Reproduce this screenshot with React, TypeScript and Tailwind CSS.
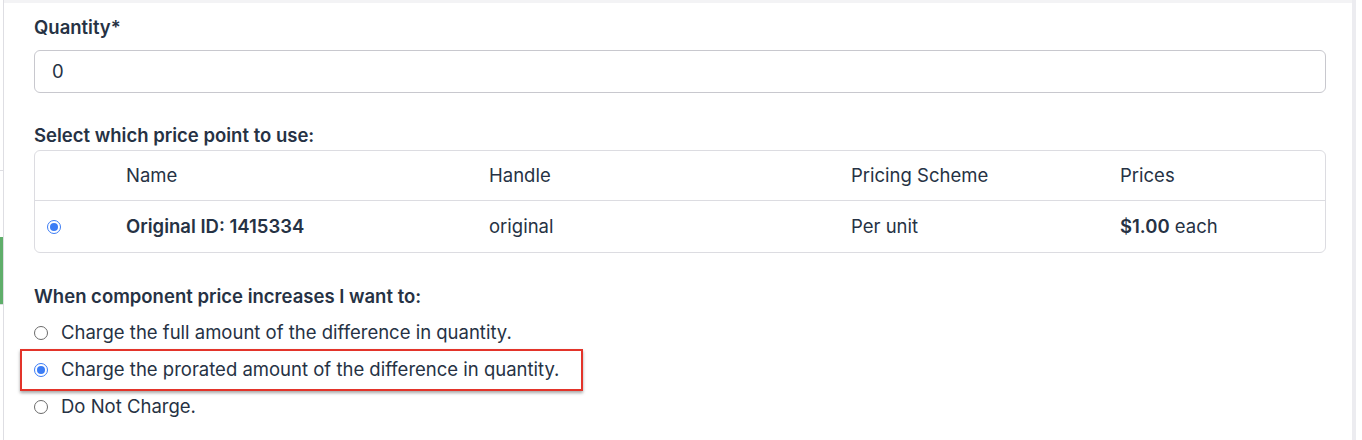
import React, { useState } from 'react';

const options = [
  'Charge the full amount of the difference in quantity.',
  'Charge the prorated amount of the difference in quantity.',
  'Do Not Charge.',
];

function Radio({ checked }: { checked: boolean }) {
  if (checked) {
    return (
      <span className="w-[14px] h-[14px] rounded-full border-[1.5px] border-[#3b7cf5] flex items-center justify-center bg-white shrink-0">
        <span className="w-[8px] h-[8px] rounded-full bg-[#3b7cf5]" />
      </span>
    );
  }
  return <span className="w-[14px] h-[14px] rounded-full border border-[#6b6b6b] bg-white shrink-0" />;
}

export default function App() {
  const [choice, setChoice] = useState(1);

  return (
    <div className="w-[1362px] h-[440px] bg-white flex overflow-hidden text-[#263244] text-[18.5px]" style={{ fontFamily: 'Inter, "Noto Sans", sans-serif' }}>
      {/* left edge */}
      <div className="w-[4px] shrink-0 border-r border-[#dedee3] flex flex-col">
        <div className="h-[171px] border-b border-[#dedee3]" />
        <div className="h-[66px]" />
        <div className="h-[68px] w-[3px] bg-[#5fae6a] border-b border-[#dedee3]" />
      </div>

      <main className="flex-1 flex flex-col border-t-[3px] border-[#f3f3f5] pl-[30px] pr-[26px]">
        <label className="mt-[12px] font-semibold leading-[24px]">Quantity*</label>
        <div className="mt-[11px] h-[43px] shrink-0 border border-[#c8c8ce] rounded-[6px] flex items-center px-[17px]">0</div>

        <div className="mt-[30px] font-semibold leading-[24px]">Select which price point to use:</div>
        <div className="mt-[3px] border border-[#dcdce1] rounded-[6px]">
          <div className="grid grid-cols-[91px_363px_362px_269px_1fr] h-[50px] items-center border-b border-[#dcdce1]">
            <div />
            <div>Name</div>
            <div>Handle</div>
            <div>Pricing Scheme</div>
            <div>Prices</div>
          </div>
          <div className="grid grid-cols-[91px_363px_362px_269px_1fr] h-[51px] items-center">
            <div className="pl-[12px] flex"><Radio checked /></div>
            <div className="font-semibold">Original ID: 1415334</div>
            <div>original</div>
            <div>Per unit</div>
            <div><span className="font-semibold">$1.00</span> each</div>
          </div>
        </div>

        <div className="mt-[31px] font-semibold leading-[24px]">When component price increases I want to:</div>
        <div className="mt-[9px] flex flex-col">
          {options.map((opt, i) => {
            const boxed = i === 1;
            return (
              <div key={opt} className={boxed ? '-ml-[14px] w-[563px] h-[42px] border-2 border-[#e3342a] shadow-[0_2px_3px_rgba(0,0,0,0.35)] flex items-center pl-[12px]' : 'h-[32px] flex items-center'}>
                <button onClick={() => setChoice(i)} className="flex items-center gap-[13px] text-left">
                  <Radio checked={choice === i} />
                  <span>{opt}</span>
                </button>
              </div>
            );
          })}
        </div>
      </main>

      {/* right edge */}
      <div className="w-[10px] shrink-0 flex">
        <div className="w-[4px] bg-[#ececf0]" />
        <div className="flex-1 bg-white" />
      </div>
    </div>
  );
}
